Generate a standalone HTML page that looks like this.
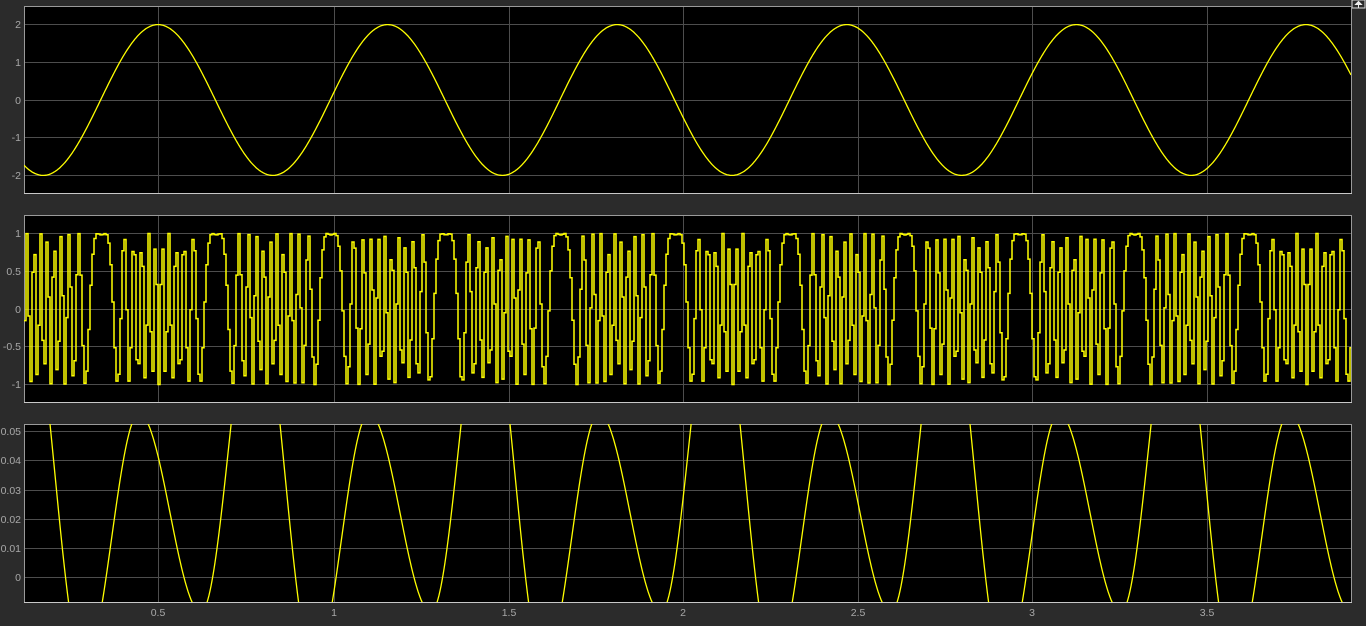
<!DOCTYPE html>
<html><head><meta charset="utf-8"><style>
html,body{margin:0;padding:0;background:#2b2b2b;width:1366px;height:626px;overflow:hidden}
svg{position:absolute;left:0;top:0}
text{font-family:"Liberation Sans",sans-serif;font-size:10.5px;fill:#a8a8a8}
</style></head><body>
<svg id="s" width="1366" height="626" xmlns="http://www.w3.org/2000/svg">
<defs>
<clipPath id="c1"><rect x="24" y="6" width="1327" height="187"/></clipPath>
<clipPath id="c2"><rect x="24" y="215" width="1327" height="187"/></clipPath>
<clipPath id="c3"><rect x="24" y="424" width="1327" height="178"/></clipPath>
</defs>
<rect x="1351" y="0" width="15" height="626" fill="#2b2b2b"/>
<rect x="1352" y="0" width="13" height="8" fill="#2b2b2b" stroke="#ddd" stroke-width="1"/>
<path d="M1358.5 1.5 L1355.5 4.5 L1361.5 4.5 Z M1358.5 4 V7.5" stroke="#eee" fill="#eee" stroke-width="1"/>
<g id="g"></g>
</svg>
<script>
var ns="http://www.w3.org/2000/svg",g=document.getElementById("g");
function el(t,a,txt){var e=document.createElementNS(ns,t);for(var k in a)e.setAttribute(k,a[k]);if(txt!=null)e.textContent=txt;g.appendChild(e);return e;}
var L=24,R=1351,xt=[158,334,509,683,858,1032,1207],xl=["0.5","1","1.5","2","2.5","3","3.5"];
var panels=[{t:6,b:193,ys:[[24,"2"],[62,"1"],[100,"0"],[137,"-1"],[175,"-2"]]},
{t:215,b:402,ys:[[233,"1"],[271,"0.5"],[309,"0"],[346,"-0.5"],[384,"-1"]]},
{t:424,b:602,ys:[[431,"0.05"],[460,"0.04"],[490,"0.03"],[519,"0.02"],[548,"0.01"],[577,"0"]]}];
panels.forEach(function(p,i){
 el("rect",{x:L,y:p.t,width:R-L,height:p.b-p.t,fill:"#000"});
 xt.forEach(function(x){el("line",{x1:x+.5,x2:x+.5,y1:p.t,y2:p.b,stroke:"#4d4d4d"});});
 p.ys.forEach(function(y){el("line",{x1:L,x2:R,y1:y[0]+.5,y2:y[0]+.5,stroke:"#4d4d4d"});
  el("text",{x:21,y:y[0]+4,"text-anchor":"end"},y[1]);});
 el("path",{d:"M"+L+".5 "+p.b+" V"+(p.t+.5)+" H"+(R+.5)+" V"+p.b,fill:"none",stroke:"#9a9a9a"});
 el("line",{x1:L,x2:R+1,y1:p.b+.5,y2:p.b+.5,stroke:"#c8c8c8"});
});
xt.forEach(function(x,i){el("text",{x:x,y:616,"text-anchor":"middle"},xl[i]);});
var P=229.6,d="";
for(var x=L;x<=R;x+=1){var v=2*Math.cos(2*Math.PI*(x-158)/P);d+=(x==L?"M":"L")+x+" "+(100-v*37.7).toFixed(1);}
el("path",{d:d,fill:"none",stroke:"#ffff00","stroke-width":1.3,"clip-path":"url(#c1)"});
d="";var A=11*Math.PI+0.2;
for(var x=L;x<=R;x+=2){var v=Math.sin(A*Math.sin(2*Math.PI*(x-158)/P)-Math.PI/2);var y=(309-v*75.5).toFixed(1);
 d+=(x==L?"M"+x+" "+y:"V"+y)+"H"+(x+2);}
el("path",{d:d,fill:"none",stroke:"#ffff00","stroke-width":1.5,"clip-path":"url(#c2)"});
var ex=[[-14,-0.03],[41,0.056],[103,-0.012],[158,0.1],[216,-0.03]];
function f(x){var o=((x-98)%230+230)%230;if(o>=216)o-=230;
 for(var i=0;i<ex.length-1;i++){var a=ex[i],b=ex[i+1];if(o>=a[0]&&o<=b[0]){var t=(o-a[0])/(b[0]-a[0]);var s=(1-Math.cos(Math.PI*t))/2;return a[1]+(b[1]-a[1])*s;}}
 return -0.03;}
d="";
for(var x=L;x<=R;x+=1){var v=f(x);var y=577-v*2920;y=Math.max(400,Math.min(630,y));d+=(x==L?"M":"L")+x+" "+y.toFixed(1);}
el("path",{d:d,fill:"none",stroke:"#ffff00","stroke-width":1.3,"clip-path":"url(#c3)"});
</script>
</body></html>
